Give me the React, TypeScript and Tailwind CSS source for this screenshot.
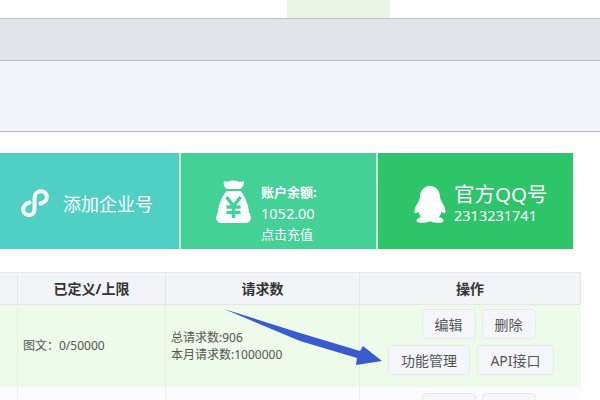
const font = { fontFamily: '"Noto Sans", "Noto Sans CJK SC", sans-serif' };

function Btn({ w, children }: { w: string; children: React.ReactNode }) {
  return (
    <button className={`${w} h-[30px] flex items-center justify-center rounded-[4px] border border-[#e8eaee] bg-[#f4f6f9] text-[14px] text-[#555]`}>
      {children}
    </button>
  );
}

function Mini() {
  return (
    <svg viewBox="0 0 28 28" className="w-[28px] h-[28px]" fill="none" stroke="#fff" strokeWidth="4" strokeLinecap="round">
      <path d="M8.5 13.5C4.5 14.5 2.2 17.5 2.2 20.5C2.2 24 5 26 8 26C11 26 13.5 24 13.5 20.5V9C13.5 5 16.5 2.2 20 2.2C23.5 2.2 25.8 4.8 25.8 7.8C25.8 11 23.5 13.5 19.5 14.5" />
    </svg>
  );
}

function Bag() {
  return (
    <svg viewBox="0 0 35 43" className="w-[35px] h-[43px]">
      <path fill="#fff" d="M8 1C11 3 13 0 18 0.5C22 1 24 3 27.5 1C28.5 4 27 7 24.5 9H10.5C8 7 7 4 8 1Z" />
      <path fill="#fff" d="M10.5 11H24.5C29 16 32.5 25 33 32C33.6 34 35.2 36 34.8 38.5C34.4 41.5 32 43 29 43H6C3 43 .6 41.5 .2 38.5C-.2 36 1.4 34 2 32C2.5 25 6 16 10.5 11Z" />
      <path fill="none" stroke="#44d197" strokeWidth="3.4" d="M10.5 17L17.5 26L24.5 17M17.5 26V38M10.5 27H24.5M10.5 32.5H24.5" />
    </svg>
  );
}

function Qq() {
  return (
    <svg viewBox="0 0 32 37" className="w-[32px] h-[37px] mt-[2px]">
      <path fill="#fff" d="M16 0C22 0 25.5 4.5 26 10C26 13 27 14 28 16.5C30 19 32 24 31.5 26.5C31 28 29 27 27.5 25.5C27 28 26 30 25 31C28 32 30 33 29.5 35C29 37 24 37 20 36.5C18 36 17 35.5 16 35.5C15 35.5 14 36 12 36.5C8 37 3 37 2.5 35C2 33 4 32 7 31C6 30 5 28 4.5 25.5C3 27 1 28 .5 26.5C0 24 2 19 4 16.5C5 14 6 13 6 10C6.5 4.5 10 0 16 0Z" />
    </svg>
  );
}

const head = "h-[33px] bg-[#f3f4f8] border-y border-r border-[#e4e6ea] flex items-center justify-center text-[14px] font-bold text-[#333]";
const row = "h-[82px] bg-[#eefaea] border-r border-[#e6f0e3]";
const next = "h-[14px] bg-[#fcfcff] border-r border-[#eeeef2]";

export default function App() {
  return (
    <div className="relative w-[600px] h-[400px] overflow-hidden bg-white" style={font}>
      <div className="h-[18px] pl-[287px]">
        <div className="w-[103px] h-[18px] bg-[#e9f3e6]" />
      </div>
      <div className="h-[43px] bg-[#e3e4e9] border-y border-[#bdbfc3]" />
      <div className="h-[71px] bg-[#f3f4f9] border-b border-[#b5b6bb]" />

      <div className="mt-[21px] flex h-[96px] w-[573px] text-white">
        <div className="w-[179px] bg-[#50d0c4] flex items-center pl-[21px] gap-[14px] pt-[4px]">
          <Mini />
          <span className="text-[18px] leading-none mt-[1px]">添加企业号</span>
        </div>
        <div className="w-[199px] border-x-2 border-[#c8e6dc] bg-[#44d197] flex items-center pl-[35px] gap-[10px]">
          <Bag />
          <div className="flex flex-col mt-[24px]">
            <span className="text-[13px] leading-[21px] font-bold">账户余额:</span>
            <span className="text-[14.5px] leading-[21px]">1052.00</span>
            <span className="text-[13px] leading-[21px]">点击充值</span>
          </div>
        </div>
        <div className="flex-1 bg-[#2dc46a] flex items-center pl-[36px] gap-[8px] pt-[4px]">
          <Qq />
          <div className="flex flex-col">
            <span className="text-[20.5px] leading-[24px]">官方QQ号</span>
            <span className="text-[14.5px] leading-[18px]">2313231741</span>
          </div>
        </div>
      </div>

      <div className="mt-[23px] w-[581px] grid grid-cols-[18px_148px_194px_221px] text-[#555] text-[12px]">
        <div className={head} />
        <div className={head}>已定义/上限</div>
        <div className={head}>请求数</div>
        <div className={head}>操作</div>

        <div className={row} />
        <div className={`${row} flex items-center pl-[5px]`}>图文：0/50000</div>
        <div className={`${row} flex flex-col justify-center pl-[5px] leading-[17px]`}>
          <span>总请求数:906</span>
          <span>本月请求数:1000000</span>
        </div>
        <div className="h-[82px] bg-[#eefaea] flex flex-col items-center pt-[4px] gap-[6px]">
          <div className="flex gap-[6px] pl-[16px]">
            <Btn w="w-[54px]">编辑</Btn>
            <Btn w="w-[54px]">删除</Btn>
          </div>
          <div className="flex gap-[7px] pl-[1px]">
            <Btn w="w-[82px]">功能管理</Btn>
            <Btn w="w-[77px]">API接口</Btn>
          </div>
        </div>

        <div className={next} />
        <div className={next} />
        <div className={next} />
        <div className="h-[14px] bg-[#fcfcff] flex justify-center gap-[6px] pl-[16px] pt-[6px]">
          <Btn w="w-[54px]">{""}</Btn>
          <Btn w="w-[54px]">{""}</Btn>
        </div>
      </div>

      <svg className="absolute left-0 top-0 pointer-events-none" width="600" height="400" viewBox="0 0 600 400">
        <polygon fill="#3a5bd0" points="224,309 300,333 360,351 363,346 382,361 356,365 357,358 300,341" />
      </svg>
    </div>
  );
}
